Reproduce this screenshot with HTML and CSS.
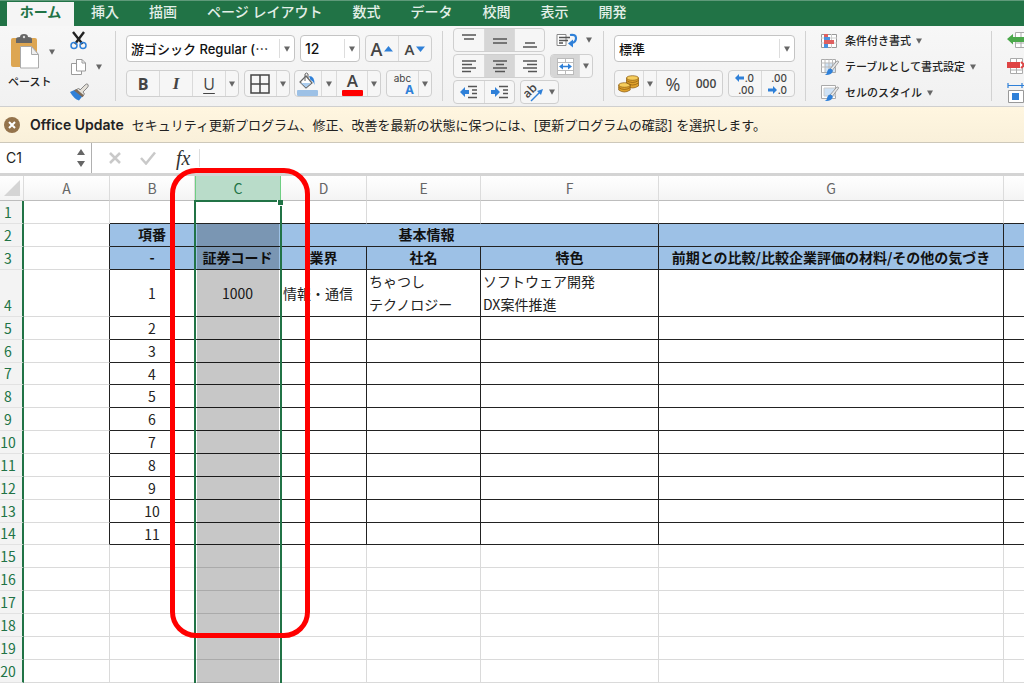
FILE: index.html
```html
<!DOCTYPE html>
<html lang="ja">
<head>
<meta charset="utf-8">
<title>Excel</title>
<link rel="stylesheet" href="styles.css">
</head>
<body>
<svg class="defs" aria-hidden="true">
  <symbol id="down" viewBox="0 0 6 6"><path d="M0 0.5h6L3 5.8z" fill="#666"/></symbol>
  <symbol id="brush" viewBox="0 0 20 20">
    <path d="M19 2.500 11 13l-2.500-2.200L16 2q2.500-2 3 .500z" fill="#e8e8e8" stroke="#777" stroke-width=".8"/>
    <path d="M1.500 18.500q3-.800 3.200-4.500 1.200-4 4.600-3.200 3.400 1.400 1.700 4.500-2.500 4.200-9.500 3.200z" fill="#2f80d8"/>
  </symbol>
</svg>

<nav class="tabs">
  <button class="tab tab-active">ホーム</button>
  <button class="tab">挿入</button>
  <button class="tab">描画</button>
  <button class="tab">ページ レイアウト</button>
  <button class="tab">数式</button>
  <button class="tab">データ</button>
  <button class="tab">校閲</button>
  <button class="tab">表示</button>
  <button class="tab">開発</button>
</nav>

<div class="ribbon">
  <div class="group paste-group">
    <button class="plain paste">
      <span class="paste-icon">
        <svg width="28" height="36" viewBox="0 0 28 36">
          <rect x="0" y="4" width="26" height="29" rx="2" fill="#dda652"/>
          <path d="M5 9V5q0-2 4-2 0-3 4-3t4 3q4 0 4 2v4z" fill="#666"/>
          <circle cx="13" cy="3" r="1.200" fill="#ddd"/>
          <path d="M9.500 12.500h11l7 8V34h-18z" fill="#fff" stroke="#aaa"/>
          <path d="M20.500 12.500v8h7z" fill="#eee" stroke="#aaa"/>
        </svg>
        <svg width="6" height="6"><use href="#down"/></svg>
      </span>
      ペースト
    </button>
    <div class="clip">
      <button class="plain" aria-label="切り取り">
        <svg width="18" height="20" viewBox="0 0 18 20">
          <path d="M3 1 12.500 13M14 1 5 13" stroke="#222" stroke-width="2.400" fill="none"/>
          <circle cx="4" cy="14.500" r="3" fill="none" stroke="#2f80d8" stroke-width="1.500"/>
          <circle cx="13" cy="14.500" r="3" fill="none" stroke="#2f80d8" stroke-width="1.500"/>
        </svg>
      </button>
      <button class="plain copy" aria-label="コピー">
        <svg width="18" height="18" viewBox="0 0 18 18" fill="#fff" stroke="#9a9a9a">
          <path d="M1.500 5.500h7l3 3v8h-10z"/><path d="M6.500 1.500h5.500l3.500 3.500v8h-9z"/><path d="M12 1.500v3.500h3.500" fill="none"/>
        </svg>
        <svg width="6" height="6"><use href="#down"/></svg>
      </button>
      <button class="plain" aria-label="書式のコピー">
        <svg width="20" height="18" viewBox="0 0 20 18">
          <path d="M10 7l5-5q2-2 3-.500t-1 3.500l-4 4 1.500 2-2 2L6.500 7l2-2z" fill="#e4e0d8" stroke="#888"/>
          <path d="M5.500 6.500 13 12.500 9 17.500Q4 16 0 9z" fill="#2f80d8"/><path d="M6.500 6 14 12.500l-1.500 1.800L4 7.600z" fill="#7d6a58"/>
        </svg>
      </button>
    </div>
  </div>
  <span class="sep"></span>

  <div class="group font-group">
    <div class="row">
      <div class="combo combo-font"><input aria-label="フォント" value="游ゴシック Regular (⋯"><button aria-label="フォント一覧"><svg width="6" height="6"><use href="#down"/></svg></button></div>
      <div class="combo combo-size"><input aria-label="フォント サイズ" value="12"><button aria-label="サイズ一覧"><svg width="6" height="6"><use href="#down"/></svg></button></div>
      <div class="set">
        <button class="w33 big-a" aria-label="拡大">A<svg width="9" height="6"><path d="M0 5.500 4.500 0 9 5.500z" fill="#2f80d8"/></svg></button>
        <button class="w33 small-a" aria-label="縮小">A<svg width="9" height="6"><path d="M0 .500h9L4.500 6z" fill="#2f80d8"/></svg></button>
      </div>
    </div>
    <div class="row">
      <div class="set">
        <button class="w33 bold">B</button><button class="w33 italic">I</button><button class="w33 under">U</button>
        <button class="drop" aria-label="下線"><svg width="6" height="6"><use href="#down"/></svg></button>
      </div>
      <div class="set">
        <button class="w32" aria-label="罫線"><svg width="20" height="20" fill="none" stroke="#444" stroke-width="1.500"><path d="M1 1h18v18H1zM10 1v18M1 10h18"/></svg></button>
        <button class="drop" aria-label="罫線の種類"><svg width="6" height="6"><use href="#down"/></svg></button>
      </div>
      <div class="set">
        <button class="w27" aria-label="塗りつぶし"><svg width="22" height="24" viewBox="0 0 22 24">
          <path d="M9 4 15 11 9 16 3 10z" fill="#fff" stroke="#666" stroke-width="1.200"/><path d="M4 11h10l-5 4.500z" fill="#aaccee"/><path d="M8 9V2q1.500-2 3 0v4" fill="none" stroke="#666"/><path d="M12 4q6 0 5.500 9-1-4-4-5z" fill="#2f80d8"/>
          <rect x="0" y="18" width="21" height="6" rx="1" fill="#9dc1e6"/></svg></button>
        <button class="drop drop-fill" aria-label="塗りつぶしの色"><svg width="6" height="6"><use href="#down"/></svg></button>
        <button class="w32 font-color">A<span class="swatch"></span></button>
        <button class="drop" aria-label="フォントの色"><svg width="6" height="6"><use href="#down"/></svg></button>
      </div>
      <div class="set">
        <button class="w32 ruby"><span>abc</span><b>A</b></button>
        <button class="drop" aria-label="ふりがな"><svg width="6" height="6"><use href="#down"/></svg></button>
      </div>
    </div>
  </div>
  <span class="sep"></span>

  <div class="group align-group">
    <div class="row">
      <div class="set">
        <button class="w31" aria-label="上揃え"><svg width="16" height="16" stroke="#555" stroke-width="1.500"><path d="M1 3h14M3 7h10"/></svg></button>
        <button class="w31 on" aria-label="上下中央揃え"><svg width="16" height="16" stroke="#555" stroke-width="1.500"><path d="M1 7h14M1 11h14"/></svg></button>
        <button class="w31" aria-label="下揃え"><svg width="16" height="16" stroke="#555" stroke-width="1.500"><path d="M3 11h10M1 15h14"/></svg></button>
      </div>
      <button class="plain wrap" aria-label="折り返し">
        <svg width="22" height="16" viewBox="0 0 22 16" fill="none" stroke="#888"><path d="M1 2.500h9v11H1z" fill="#fff"/><path d="M3 5.500h11M3 8.500h9M3 11h4" stroke="#555" stroke-width="1.300"/><path d="M14 3q6-1 6 3 0 4-4 5" stroke="#2f80d8" stroke-width="2.200"/><path d="m12 11.500 5-4v8z" fill="#2f80d8" stroke="none"/></svg>
        <svg width="6" height="6"><use href="#down"/></svg>
      </button>
    </div>
    <div class="row">
      <div class="set">
        <button class="w31" aria-label="左揃え"><svg width="16" height="14" stroke="#555" stroke-width="1.500"><path d="M1 2h14M1 5.500h10M1 9h14M1 12.500h9"/></svg></button>
        <button class="w31 on" aria-label="中央揃え"><svg width="16" height="14" stroke="#555" stroke-width="1.500"><path d="M1 2h14M4 5.500h8M1 9h14M3 12.500h10"/></svg></button>
        <button class="w31" aria-label="右揃え"><svg width="16" height="14" stroke="#555" stroke-width="1.500"><path d="M1 2h14M5 5.500h10M1 9h14M6 12.500h9"/></svg></button>
      </div>
      <div class="set">
        <button class="w29 on" aria-label="セルを結合"><svg width="17" height="17" viewBox="0 0 17 17"><rect x=".500" y=".500" width="16" height="16" fill="#fff" stroke="#bbb"/><path d="M.500 4.500h16M.500 12.500h16M8.500 0v4.500M8.500 12.500V17" stroke="#bbb"/><path d="M4 8.500h9" stroke="#2f80d8" stroke-width="1.500"/><path d="m2 8.500 4-3v6zM15 8.500l-4-3v6z" fill="#2f80d8"/></svg></button>
        <button class="drop" aria-label="結合の種類"><svg width="6" height="6"><use href="#down"/></svg></button>
      </div>
    </div>
    <div class="row row-indent">
      <div class="set">
        <button class="w31" aria-label="インデントを減らす"><svg width="18" height="14" viewBox="0 0 18 14"><path d="M0 7 5 2v3h4v4H5v3z" fill="#2f80d8"/><path d="M8 1.500h9M12 5h5M12 8.500h5M8 12.500h9" stroke="#555" stroke-width="1.400"/></svg></button>
        <button class="w31" aria-label="インデントを増やす"><svg width="18" height="14" viewBox="0 0 18 14"><path d="M9 7 4 2v3H0v4h4v3z" fill="#2f80d8"/><path d="M8 1.500h9M12 5h5M12 8.500h5M8 12.500h9" stroke="#555" stroke-width="1.400"/></svg></button>
      </div>
      <div class="set">
        <button class="orient" aria-label="文字の方向"><svg width="20" height="22" viewBox="0 0 20 22"><text x="0" y="15" transform="rotate(-45 5 12)" font-family="Open Sans, sans-serif" font-size="12" font-weight="600" fill="#444">ab</text><path d="M7 20 16 11" stroke="#2f80d8" stroke-width="1.500"/><path d="m19 8-6 2 4 4z" fill="#2f80d8"/></svg><svg width="6" height="6"><use href="#down"/></svg></button>
      </div>
    </div>
  </div>
  <span class="sep"></span>

  <div class="group number-group">
    <div class="row">
      <div class="combo combo-format"><select aria-label="表示形式"><option>標準</option></select><span class="arrow"><svg width="6" height="6"><use href="#down"/></svg></span></div>
    </div>
    <div class="row">
      <div class="set">
        <button class="w29" aria-label="通貨"><svg width="22" height="18" viewBox="0 0 22 18" stroke="#8a5a10" stroke-width=".7"><g fill="#dfa22c"><path d="M8.500 3v8q6 4 12 0V3z"/><path d="M.700 10v5q5.500 4 11.500 0v-5z"/></g><g fill="#f6cd5c"><ellipse cx="14.500" cy="3" rx="6" ry="2.300"/><ellipse cx="6.500" cy="10" rx="5.800" ry="2.300"/></g><path d="M8.500 5.500q6 4 12 0M8.500 8q6 4 12 0M.700 12.500q5.500 4 11.500 0" fill="none"/></svg></button>
        <button class="drop" aria-label="通貨の種類"><svg width="6" height="6"><use href="#down"/></svg></button>
        <button class="w33 percent">%</button>
        <button class="w33 comma">000</button>
      </div>
      <div class="set">
        <button class="w33 dec"><span><svg width="10" height="8"><path d="M0 4 4 0v2.500h5v3H4V8z" fill="#2f80d8"/></svg>.0</span><span>.00</span></button>
        <button class="w33 dec"><span>.00</span><span><svg width="10" height="8"><path d="M9 4 5 0v2.500H0v3h5V8z" fill="#2f80d8"/></svg>.0</span></button>
      </div>
    </div>
  </div>
  <span class="sep"></span>

  <div class="group style-group">
    <button class="plain style-btn">
      <svg width="20" height="18" viewBox="0 0 20 18"><path d="M1.500 2.500h15v13h-15z" fill="#fff" stroke="#999"/><path d="M6.500 2v14M11.500 2v14M1 6h16M1 11h16" stroke="#ccc"/><path d="M4 2h4v3H4zM4 8h10v4H4z" fill="#df6060"/><path d="M4 5h6v3H4zM4 12h4v4H4z" fill="#4b92de"/></svg>
      条件付き書式 <svg width="6" height="6"><use href="#down"/></svg>
    </button>
    <button class="plain style-btn">
      <svg width="20" height="18" viewBox="0 0 20 18"><path d="M1.500 1.500h14v13h-14z" fill="#fff" stroke="#aaa"/><path d="M5 5h10v9H5z" fill="#cfe2f5"/><path d="M5 1v13M9 1v13M12.500 1v13M1 5h15M1 9h15" stroke="#bbb"/><use href="#brush" x="3" y="2" width="17" height="16"/></svg>
      テーブルとして書式設定 <svg width="6" height="6"><use href="#down"/></svg>
    </button>
    <button class="plain style-btn">
      <svg width="20" height="18" viewBox="0 0 20 18"><path d="M1.500 1.500h14v13h-14z" fill="#fff" stroke="#aaa"/><path d="M4 4h11v8H4z" fill="#cfe2f5" stroke="#ccc"/><use href="#brush" x="3" y="2" width="17" height="16"/></svg>
      セルのスタイル <svg width="6" height="6"><use href="#down"/></svg>
    </button>
  </div>
  <span class="sep"></span>

  <div class="group cell-group">
    <button class="plain" aria-label="挿入"><svg width="24" height="18" viewBox="0 0 24 18"><path d="M8.500 1.500h14v15h-14zM14 1v16M8 12h16" fill="#fff" stroke="#aaa"/><path d="M0 8 6 3v3h18v5H6v2.500z" fill="#4ba84b"/></svg></button>
    <button class="plain" aria-label="削除"><svg width="24" height="18" viewBox="0 0 24 18"><path d="M3.500 1.500h12v15h-12zM9.500 1v16M3 13h13" fill="#fff" stroke="#aaa"/><path d="M0 5h13v6H0z" fill="#df4444"/><path d="m14 5 7 6M21 5l-7 6" stroke="#df4444" stroke-width="2"/></svg></button>
    <button class="plain" aria-label="書式"><svg width="24" height="20" viewBox="0 0 24 20"><path d="M1 2.500h16M1 0v5M15 0v5" stroke="#2f80d8" stroke-width="1.200" fill="none"/><path d="M1.500 7.500h15v12h-15z" fill="#fff" stroke="#999"/><path d="M5 10h7v7H5z" fill="#2f80d8"/></svg></button>
  </div>
</div>

<div class="notice">
  <button class="plain" aria-label="閉じる"><svg width="16" height="16"><circle cx="8" cy="8" r="8" fill="#94734b"/><path d="m5 5 6 6M11 5l-6 6" stroke="#fff" stroke-width="2"/></svg></button>
  <strong>Office Update</strong>
  <span>セキュリティ更新プログラム、修正、改善を最新の状態に保つには、[更新プログラムの確認] を選択します。</span>
</div>

<div class="formula">
  <div class="namebox">
    <input aria-label="名前ボックス" value="C1">
    <button class="plain" aria-label="名前の一覧"><svg width="8" height="20"><path d="M0 7 4 1l4 6zM0 13h8l-4 6z" fill="#666"/></svg></button>
  </div>
  <button class="plain" aria-label="キャンセル"><svg width="14" height="14"><path d="m2 2 10 10M12 2 2 12" stroke="#c9c9c9" stroke-width="2.500"/></svg></button>
  <button class="plain" aria-label="入力"><svg width="16" height="14" fill="none"><path d="m1 7 5 5.500L15 1.500" stroke="#c9c9c9" stroke-width="2.500"/></svg></button>
  <button class="plain fx">fx</button>
  <input class="formula-input" aria-label="数式">
</div>

<main class="sheet">
<table class="grid">
  <colgroup><col class="c-num"><col class="c-a"><col class="c-b"><col class="c-c"><col class="c-d"><col class="c-e"><col class="c-f"><col class="c-g"><col></colgroup>
  <thead>
    <tr><th class="corner"><svg width="18" height="18"><path d="M17 1v16H1z" fill="#d5d5d5"/></svg></th><th>A</th><th>B</th><th class="picked">C</th><th>D</th><th>E</th><th>F</th><th>G</th><th></th></tr>
  </thead>
  <tbody>
    <tr class="before"><th>1</th><td></td><td></td><td></td><td></td><td></td><td></td><td></td><td></td></tr>
    <tr class="head"><th>2</th><td></td><td>項番</td><td colspan="4">基本情報</td><td></td><td></td></tr>
    <tr class="head"><th>3</th><td></td><td>-</td><td>証券コード</td><td>業界</td><td>社名</td><td>特色</td><td>前期との比較/比較企業評価の材料/その他の気づき</td><td></td></tr>
    <tr class="data tall"><th>4</th><td></td><td>1</td><td>1000</td><td class="left">情報・通信</td><td class="left">ちゃつし<br>テクノロジー</td><td class="left">ソフトウェア開発<br>DX案件推進</td><td></td><td></td></tr>
    <tr class="data"><th>5</th><td></td><td>2</td><td></td><td></td><td></td><td></td><td></td><td></td></tr>
    <tr class="data"><th>6</th><td></td><td>3</td><td></td><td></td><td></td><td></td><td></td><td></td></tr>
    <tr class="data"><th>7</th><td></td><td>4</td><td></td><td></td><td></td><td></td><td></td><td></td></tr>
    <tr class="data"><th>8</th><td></td><td>5</td><td></td><td></td><td></td><td></td><td></td><td></td></tr>
    <tr class="data"><th>9</th><td></td><td>6</td><td></td><td></td><td></td><td></td><td></td><td></td></tr>
    <tr class="data"><th>10</th><td></td><td>7</td><td></td><td></td><td></td><td></td><td></td><td></td></tr>
    <tr class="data"><th>11</th><td></td><td>8</td><td></td><td></td><td></td><td></td><td></td><td></td></tr>
    <tr class="data"><th>12</th><td></td><td>9</td><td></td><td></td><td></td><td></td><td></td><td></td></tr>
    <tr class="data"><th>13</th><td></td><td>10</td><td></td><td></td><td></td><td></td><td></td><td></td></tr>
    <tr class="data"><th>14</th><td></td><td>11</td><td></td><td></td><td></td><td></td><td></td><td></td></tr>
    <tr><th>15</th><td></td><td></td><td></td><td></td><td></td><td></td><td></td><td></td></tr>
    <tr><th>16</th><td></td><td></td><td></td><td></td><td></td><td></td><td></td><td></td></tr>
    <tr><th>17</th><td></td><td></td><td></td><td></td><td></td><td></td><td></td><td></td></tr>
    <tr><th>18</th><td></td><td></td><td></td><td></td><td></td><td></td><td></td><td></td></tr>
    <tr><th>19</th><td></td><td></td><td></td><td></td><td></td><td></td><td></td><td></td></tr>
    <tr><th>20</th><td></td><td></td><td></td><td></td><td></td><td></td><td></td><td></td></tr>
  </tbody>
</table>
<div class="selection"><div class="shade"></div><span class="handle"></span></div>
<div class="callout"></div>
</main>
</body>
</html>
```
FILE: styles.css
```css
* { box-sizing: border-box; }
body {
  margin: 0;
  overflow-x: hidden;
  background: #fff;
  color: #222;
  font: 13px/20px Inter, "Noto Sans CJK JP", sans-serif;
}
button, input, select { font: inherit; color: inherit; margin: 0; padding: 0; border: 0; background: none; outline: 0; }
svg { display: block; flex: none; }
.defs { position: absolute; width: 0; height: 0; }
.plain { display: flex; align-items: center; flex: none; }

/* Tabs */
.tabs {
  display: flex;
  gap: 30px;
  height: 26px;
  padding: 1px 7px 0;
  background: #217346;
  border-top: 1px solid #5f9a7a;
}
.tab { color: #e3efe8; font-size: 14px; font-weight: 500; line-height: 20px; padding-bottom: 4px; white-space: nowrap; }
.tab-active { width: 67px; margin-right: -13px; background: #f5f5f5; color: #217346; font-weight: 700; }

/* Ribbon */
.ribbon {
  display: flex;
  gap: 10px;
  height: 81px;
  background: linear-gradient(#f7f7f7, #f1f1f1);
  border-bottom: 1px solid #cfcfcf;
  overflow: hidden;
}
.sep { flex: none; width: 1px; height: 70px; margin-top: 5px; background: #d2d2d2; }
.group { flex: none; display: flex; flex-direction: column; }
.row { display: flex; justify-content: space-between; }
.row-indent { justify-content: flex-start; gap: 5px; }
.paste-group { flex-direction: row; width: 105px; padding: 5px 0 0 8px; gap: 20px; }
.paste { flex-direction: column; align-items: flex-start; gap: 4px; padding-top: 3px; font-size: 11px; font-weight: 500; line-height: 16px; width: 42px; justify-content: flex-start; white-space: nowrap; }
.paste-icon { display: flex; align-items: center; gap: 10px; padding-left: 3px; }
.clip { display: flex; flex-direction: column; gap: 7px; }
.copy { gap: 8px; }

.font-group { width: 306px; padding-top: 9px; gap: 8px; }
.number-group { width: 181px; padding-top: 9px; gap: 8px; }
.align-group { width: 140px; padding-top: 2px; gap: 2px; }
.set { display: flex; height: 27px; border: 1px solid #cfcfcf; border-radius: 4px; background: #f6f6f6; overflow: hidden; }
.align-group .set { height: 24px; }
.set button { display: flex; align-items: center; justify-content: center; color: #444; }
.set button + button { border-left: 1px solid #dadada; }
.set button.on { background: #d6d6d6; }
.w33 { width: 33px; }
.set .w33:first-child { width: 32px; }
.w32 { width: 31px; }
.w31 { width: 30px; }
.w29 { width: 28px; }
.w27 { width: 26px; }
.drop { width: 13px; }
.drop-fill { width: 15px; }
.align-group .row > .plain { width: 37px; gap: 8px; }
.orient { width: 37px; gap: 5px; }

.combo { display: flex; height: 27px; background: #fff; border: 1px solid #c4c4c4; border-radius: 4px; }
.combo input, .combo select { flex: 1; min-width: 0; padding-left: 4px; color: #111; font-weight: 500; appearance: none; }
.combo button, .arrow { width: 15px; margin: 3px 0; display: flex; align-items: center; justify-content: center; border-left: 1px solid #ddd; }
.combo-font { width: 169px; }
.combo-size { width: 60px; }
.combo-size input { font-size: 14px; }
.combo-format { flex: 1; }

.big-a, .small-a { gap: 2px; font: 600 18px/20px "Open Sans", sans-serif; }
.small-a { font-size: 15px; }
.bold { font: 700 16px/20px "Open Sans", sans-serif; }
.italic { font: italic 700 17px/20px "Liberation Serif", serif; }
.under { font: 500 16px/20px "Open Sans", sans-serif; text-decoration: underline; text-underline-offset: 3px; }
.font-color { flex-direction: column; font: 600 17px/18px "Open Sans", sans-serif; }
.swatch { width: 21px; height: 6px; border-radius: 1px; background: #f00; }
.ruby { flex-direction: column; font: 10px/12px Inter, sans-serif; }
.ruby b { color: #2f80d8; font-size: 12px; line-height: 12px; padding-left: 14px; }
.percent { font: 18px/20px "Open Sans", sans-serif; }
.comma { font: 600 12px/20px "Open Sans", sans-serif; }
.set .dec { flex-direction: column; align-items: flex-end; padding-right: 7px; font: 500 10px/12px Inter, sans-serif; }
.dec span { display: flex; align-items: center; }

.style-group { width: 165px; padding: 4px 0 0 4px; gap: 4px; }
.style-btn { gap: 5px; height: 22px; font-size: 11px; font-weight: 500; white-space: nowrap; }
.cell-group { padding: 5px 0 0 5px; gap: 8px; }

/* Update notice */
.notice {
  display: flex;
  align-items: center;
  height: 36px;
  padding-left: 4px;
  background: linear-gradient(#fff6e0, #f9f0da);
  border-bottom: 1px solid #cdc8ba;
  white-space: nowrap;
  overflow: hidden;
}
.notice strong { margin: 0 8px 0 10px; font-size: 14px; font-weight: 600; }

/* Formula bar */
.formula { display: flex; align-items: center; height: 33px; background: #fff; border-bottom: 3px solid #d4d4d4; }
.namebox { display: flex; align-items: center; width: 92px; height: 30px; padding: 0 6px; border-right: 1px solid #b0b0b0; margin-right: 16px; }
.namebox input { flex: 1; min-width: 0; font-size: 14px; }
.formula > .plain { margin-right: 18px; }
.formula > .fx { margin: 0 9px 0 2px; color: #333; font: italic 400 20px/24px "Liberation Serif", serif; }
.formula-input { flex: 1; min-width: 0; height: 18px; border-left: 1px solid #ddd; }

/* Sheet */
.sheet { position: relative; }
.grid { width: 100%; table-layout: fixed; border-collapse: separate; border-spacing: 0; font: 14px/20px "Noto Sans CJK JP", sans-serif; }
.c-num { width: 24px; }
.c-a { width: 86px; }
.c-b { width: 85px; }
.c-c { width: 86px; }
.c-d { width: 86px; }
.c-e { width: 114px; }
.c-f { width: 178px; }
.c-g { width: 345px; }
.grid th, .grid td { padding: 0; }
.grid thead th { height: 25px; background: linear-gradient(#fff, #f4f4f4); border-right: 1px solid #dcdcdc; border-bottom: 1px solid #bdbdbd; color: #666; font-weight: 400; }
.grid thead .picked { background: #b9dcc9; color: #217346; border-right-color: #6fce83; border-left: 1px solid #6fce83; }
.corner svg { margin-left: 3px; }
.grid tbody tr { height: 23px; }
.grid tbody tr:nth-child(7n) { height: 22px; }
.grid tbody th { padding: 0 6px 2px 0; background: #f3f3f3; border-right: 2px solid #217346; border-bottom: 1px solid #e2e2e2; color: #217346; font-weight: 400; line-height: 18px; vertical-align: bottom; }
.grid td { border-right: 1px solid #dadada; border-bottom: 1px solid #dadada; text-align: center; color: #222; white-space: nowrap; line-height: 20px; }
.grid .tall { height: 47px; }
.grid .before td:nth-child(n+3) { border-bottom-color: #222; }
.grid .head td:nth-child(n+3), .grid .data td:nth-child(n+3) { border-color: #222; }
.grid .head td:nth-child(2), .grid .data td:nth-child(2) { border-right-color: #222; }
.grid .head td:nth-child(n+3) { background: #9dc1e6; color: #111; font-weight: 700; line-height: 18px; padding-bottom: 2px; }
.grid tr > :last-child { border-right: 0; }
.grid .left { text-align: left; padding-left: 2px; }
.grid .tall td { line-height: 23px; }

.selection { position: absolute; top: 24px; bottom: 0; left: 194px; width: 88px; border: 2px solid #217346; border-bottom: 0; pointer-events: none; }
.shade { height: 100%; border: solid transparent; border-width: 22px 1px 0; background: rgba(0, 0, 0, .22); background-clip: padding-box; }
.handle { position: absolute; top: -2px; right: -3px; width: 6px; height: 6px; background: #217346; border-left: 1px solid #fff; border-bottom: 1px solid #fff; }
.callout { position: absolute; top: -8px; left: 170px; width: 140px; height: 470px; border: 5px solid #f00; border-radius: 26px; pointer-events: none; }
```
